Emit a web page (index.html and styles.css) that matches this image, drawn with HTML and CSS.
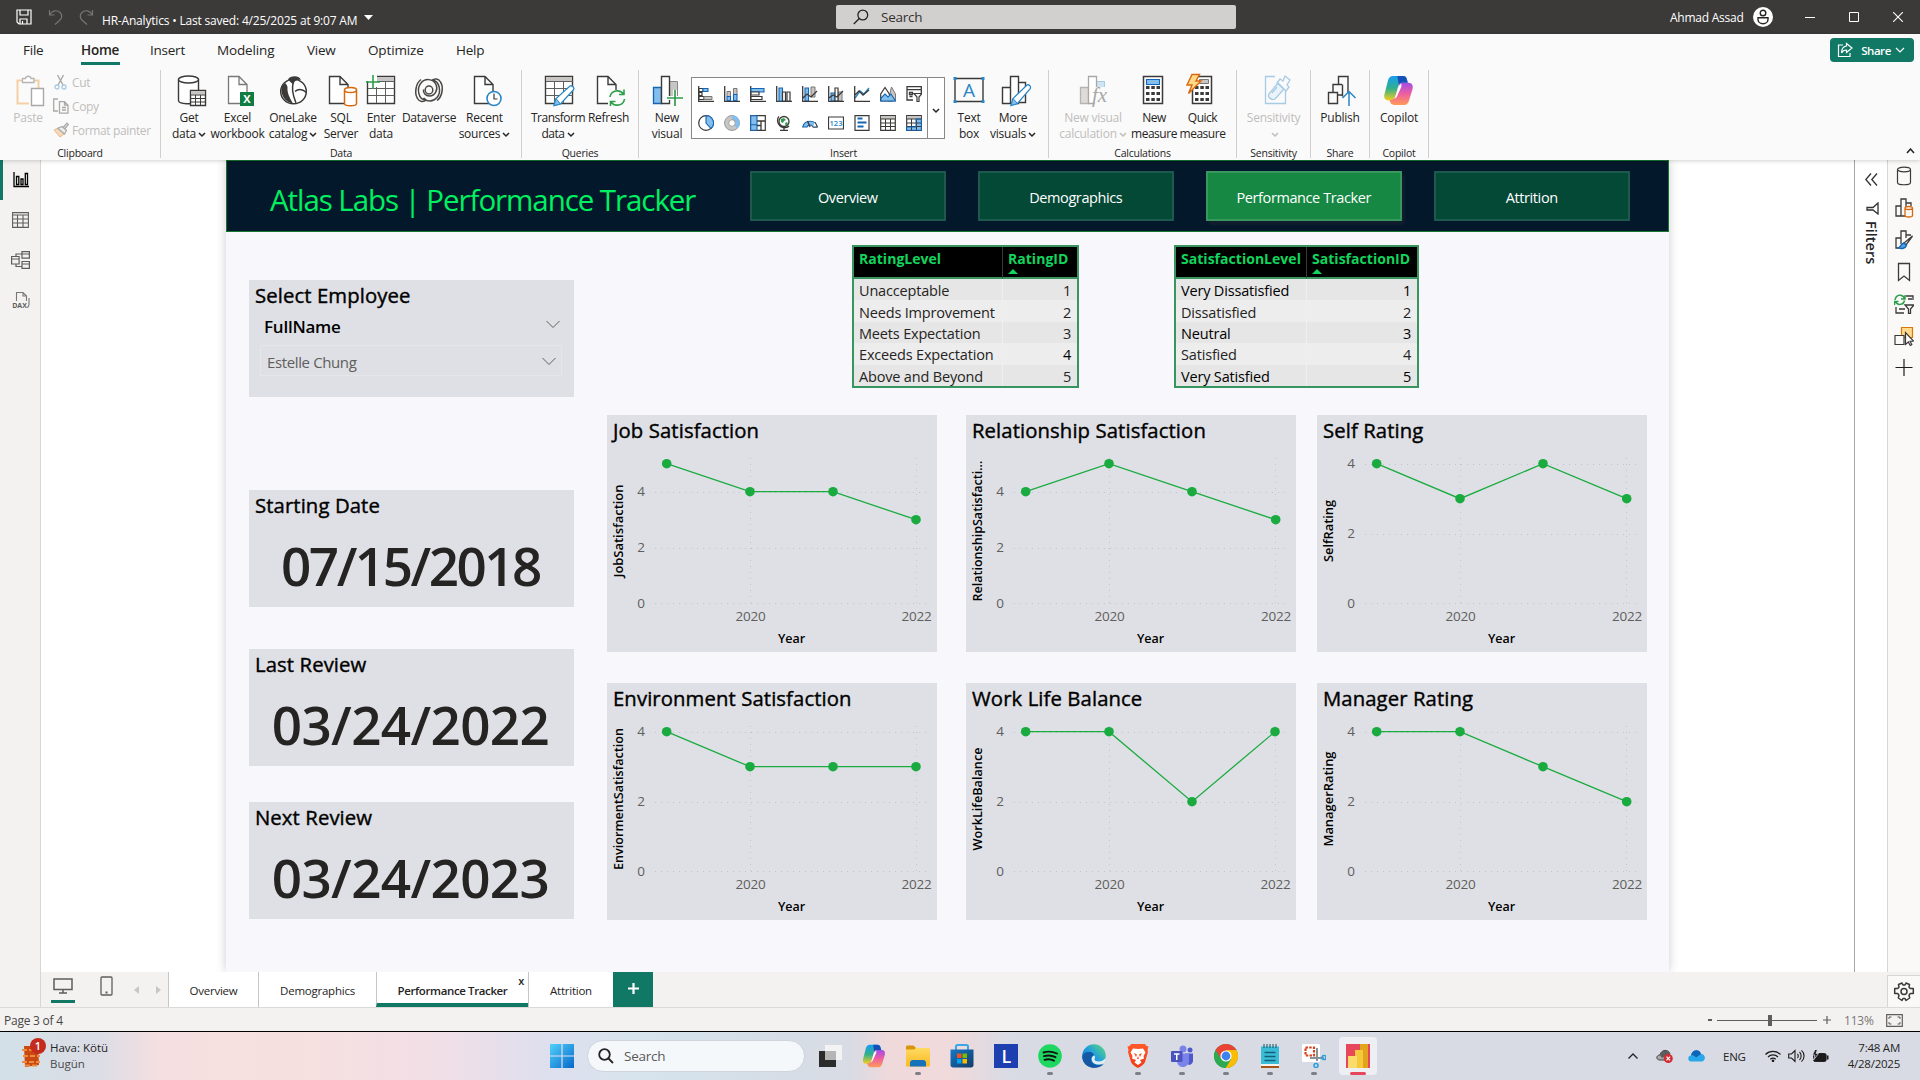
FILE: index.html
```html
<!DOCTYPE html>
<html lang="en">
<head>
<meta charset="utf-8">
<title>HR-Analytics</title>
<link rel="stylesheet" href="styles.css">
</head>
<body>
<svg class="defs" width="0" height="0" aria-hidden="true">
  <defs>
    <linearGradient id="copA" x1="0" y1="0" x2="0" y2="1"><stop offset="0" stop-color="#1a9df0"/><stop offset=".5" stop-color="#2fb08c"/><stop offset="1" stop-color="#f4cf1d"/></linearGradient>
    <linearGradient id="copB" x1="0" y1="0" x2="0" y2="1"><stop offset="0" stop-color="#a24be8"/><stop offset=".5" stop-color="#ee5fa0"/><stop offset="1" stop-color="#ff9a57"/></linearGradient>
    <linearGradient id="win" x1="0" y1="0" x2="1" y2="1"><stop offset="0" stop-color="#52d0fb"/><stop offset="1" stop-color="#0669c9"/></linearGradient>
    <linearGradient id="edge" x1="0" y1="1" x2="1" y2="0"><stop offset="0" stop-color="#0c59a4"/><stop offset=".5" stop-color="#1e9de0"/><stop offset="1" stop-color="#5fdc74"/></linearGradient>
    <linearGradient id="folder" x1="0" y1="0" x2="0" y2="1"><stop offset="0" stop-color="#ffda61"/><stop offset="1" stop-color="#f9b924"/></linearGradient>
    <linearGradient id="store" x1="0" y1="0" x2="1" y2="1"><stop offset="0" stop-color="#1479c9"/><stop offset="1" stop-color="#163a67"/></linearGradient>
    <linearGradient id="brave" x1="0" y1="0" x2="0" y2="1"><stop offset="0" stop-color="#ff5a2a"/><stop offset="1" stop-color="#f23a14"/></linearGradient>
  </defs>
  <symbol id="copilot" viewBox="0 0 28 28">
    <path d="M9 1h9c2 0 3 1 3.600 3l.8 3h-5c-2 0-3 1-3.600 3l-2.500 9c-.7 2.400-2 4-4.500 4H5c-3 0-4.500-2.500-3.700-5.600L4.500 5C5.200 2.400 6.600 1 9 1z" fill="url(#copA)"/>
    <path d="M13 1h5c2 0 3 1 3.600 3l.8 3h-5c-1.600 0-2.500.5-3.200 2z" fill="#1450b8"/>
    <path d="M19 27h-9c-2 0-3-1-3.600-3L6 22.600c3 0 4.500-1 5.200-3.600l2.800-9c.7-2 1.600-3 3.600-3H23c3 0 4.500 2.500 3.700 5.600L23.500 23c-.7 2.600-2.100 4-4.500 4z" fill="url(#copB)"/>
    <path d="M16.600 10.500 13 18.500c-.6 1.500-1.500 2.500-2.700 3l1.400-4 2-6.500c.4-1 1.600-2.500 3-3z" fill="#fff"/>
  </symbol>
  <symbol id="page" viewBox="0 0 32 32"><path d="M3.500 1.500H14L22 9.500V28.500H3.500zM14 1.500V9.500H22" fill="#fff" stroke="#3b3a39" stroke-width="1.400"/></symbol>
  <symbol id="chev" viewBox="0 0 8 6"><path d="M1 1l3 3 3-3" fill="none" stroke="currentColor" stroke-width="1.500"/></symbol>
  <symbol id="grid5" viewBox="0 0 330 237">
    <g class="gridline"><path d="M48 77.500H322M48 133.500H322M48 188.500H322"/><path d="M143.500 43V189M309.500 43V189"/></g>
  </symbol>
  <symbol id="grid4" viewBox="0 0 330 237">
    <g class="gridline"><path d="M48 49.500H322M48 119.500H322M48 188.500H322"/><path d="M143.500 43V189M309.500 43V189"/></g>
  </symbol>
</svg>

<header class="titlebar">
  <div class="quick">
    <svg width="16" height="16" viewBox="0 0 16 16" fill="none" stroke="#fff" stroke-width="1.200"><path d="M1 1h14v14H3l-2-2zM4 1v5h8V1M4 15v-5h7v5M6.500 15v-3"/></svg>
    <svg width="15" height="16" viewBox="0 0 15 16" fill="none" stroke="#777573" stroke-width="1.200"><path d="M1.500 1v5h5M1.500 6C4 1.500 9 .5 12 3.500s1.500 6-.5 8L7 15.500"/></svg>
    <svg width="15" height="16" viewBox="0 0 15 16" fill="none" stroke="#777573" stroke-width="1.200"><path d="M13.500 1v5h-5M13.500 6C11 1.500 6 .5 3 3.500s-1.500 6 .5 8L8 15.500"/></svg>
  </div>
  <div class="doc">HR-Analytics • Last saved: 4/25/2025 at 9:07 AM</div>
  <svg class="doccaret" width="9" height="5" viewBox="0 0 9 5"><path d="M0 0h9L4.500 5z" fill="#fff"/></svg>
  <div class="topsearch"><svg width="16" height="16" viewBox="0 0 16 16" fill="none" stroke="#252423" stroke-width="1.300"><circle cx="9.800" cy="6" r="4.900"/><path d="M6.300 9.500.8 15"/></svg><span>Search</span></div>
  <div class="user">Ahmad Assad</div>
  <svg class="avatar" width="20" height="20" viewBox="0 0 20 20"><circle cx="10" cy="10" r="10" fill="#fff"/><circle cx="10" cy="6" r="2.800" fill="none" stroke="#252423" stroke-width="1.400"/><path d="M5 10.800h10v1.700a5 4.300 0 0 1-10 0z" fill="none" stroke="#252423" stroke-width="1.400"/></svg>
  <div class="winbtns">
    <svg width="10" height="10" viewBox="0 0 10 10"><path d="M0 5.500h10" stroke="#fff"/></svg>
    <svg width="10" height="10" viewBox="0 0 10 10"><path d="M.5.5h9v9h-9z" fill="none" stroke="#fff"/></svg>
    <svg width="10" height="10" viewBox="0 0 10 10"><path d="M0 0l10 10M10 0 0 10" stroke="#fff" stroke-width="1.100"/></svg>
  </div>
</header>

<section class="ribbon">
  <nav class="menu">
    <a class="m-file">File</a><a class="m-home on">Home</a><a class="m-insert">Insert</a><a class="m-model">Modeling</a><a class="m-view">View</a><a class="m-opt">Optimize</a><a class="m-help">Help</a>
    <button class="share"><svg width="16" height="16" viewBox="0 0 16 16" fill="none" stroke="#fff" stroke-width="1.200"><path d="M6 3H1.500v11.500H13V11"/><path d="M9.500 1.500 15 6l-5.500 4.500V8C7 8 5.500 9 4.500 11 4.500 7 6 4.500 9.500 4z"/></svg><span>Share</span><svg width="10" height="7" viewBox="0 0 10 7"><path d="M1 1l4 4 4-4" fill="none" stroke="#fff" stroke-width="1.200"/></svg></button>
  </nav>
  <div class="groups">
    <div class="group g-clip">
      <div class="items">
        <div class="btn off w-paste"><svg viewBox="0 0 32 32"><path d="M8 5.500H3.500v23H15M20 5.500h4.500V13" fill="none" stroke="#f3cfa6" stroke-width="2"/><path d="M8.500 7.500v-4h3c.5-3 5-3 5.500 0h3v4z" fill="#fff" stroke="#b5b4b3" stroke-width="1.300"/><path d="M17.500 13.500h12v17h-12z" fill="#fff" stroke="#a9a8a7" stroke-width="1.400"/></svg><span>Paste</span></div>
        <div class="minis">
          <div><svg viewBox="0 0 16 16" fill="none"><path d="M4.500 1l5.500 10M10.500 1 5 11" stroke="#aaa9a8" stroke-width="1.400"/><circle cx="4" cy="13" r="2" stroke="#a8cbe4" stroke-width="1.300"/><circle cx="11" cy="13" r="2" stroke="#a8cbe4" stroke-width="1.300"/></svg>Cut</div>
          <div><svg viewBox="0 0 16 16" fill="none" stroke="#aaa9a8" stroke-width="1.300"><path d="M5 13H.7V1H5M6.500 3.700h5l3.500 3.500v8H6.500zM11.500 3.700v3.500H15M9 9.500h4M9 12h4"/></svg>Copy</div>
          <div><svg viewBox="0 0 16 16"><path d="M1 8l6 7 4-3-5-6.500z" fill="#f6d9b8" stroke="#e7b98b"/><path d="M5 6.500 11.500 12l2-3.500L9 4.500zM10.500 5 14 1.200l1.300 1.300L12 6.500" fill="#eee" stroke="#a9a8a7" stroke-width="1.200"/></svg>Format painter</div>
        </div>
      </div>
      <div class="label">Clipboard</div>
    </div>
    <div class="group g-data">
      <div class="items">
        <div class="btn w-get"><svg viewBox="0 0 32 32"><path d="M3.500 4.500v21c0 4 15 4 20 1.500V4.500" fill="#fff" stroke="#3b3a39" stroke-width="1.400"/><ellipse cx="13.500" cy="4.500" rx="10" ry="3.500" fill="#fff" stroke="#3b3a39" stroke-width="1.400"/><path d="M15.500 15.500h15v15h-15z" fill="#fff" stroke="#3b3a39" stroke-width="1.400"/><path d="M16 16h14v3.500H16z" fill="#c8c6c4"/><path d="M15.500 20h15M15.500 23.500h15M15.500 27h15M20.500 20v10M25.500 20v10" stroke="#3b3a39"/></svg><span>Get</span><span>data<svg class="cv"><use href="#chev"/></svg></span></div>
        <div class="btn w-excel"><svg viewBox="0 0 32 32"><path d="M6.500 1.500H17L25 9.500V28.500H6.500zM17 1.500V9.500H25" fill="#fff" stroke="#7a7876" stroke-width="1.300"/><rect x="18" y="17" width="14" height="14" fill="#107c41"/><text x="25" y="28" class="xl">X</text></svg><span>Excel</span><span>workbook</span></div>
        <div class="btn w-lake"><svg viewBox="0 0 32 32"><ellipse cx="16.500" cy="16.500" rx="12.800" ry="12.300" fill="#fff" stroke="#3b3a39" stroke-width="1.500"/><path d="M11 4.500c2-4.500 12-4.500 13 .5-3-.5-5.500.5-7 2.500l-1.500 1.500zM5 11C2.500 19 8 27.500 16 28.500c-3.500-6-6-11-5.500-16C10.500 10 8 8 8 8z" fill="#3b3a39"/><path d="M16.500 7c-3 8 1 17 2.500 21M18 16.500c4-3.500 8-2 11.500 1" fill="none" stroke="#3b3a39" stroke-width="1.500"/></svg><span>OneLake</span><span>catalog<svg class="cv"><use href="#chev"/></svg></span></div>
        <div class="btn w-sql"><svg viewBox="0 0 32 32"><use href="#page" x="1"/><path d="M19.500 15v13.500c0 3 12 3 12 0V15" fill="#fff" stroke="#d8680c" stroke-width="1.500"/><ellipse cx="25.500" cy="15" rx="6" ry="2.500" fill="#fff" stroke="#d8680c" stroke-width="1.500"/></svg><span>SQL</span><span>Server</span></div>
        <div class="btn w-enter"><svg viewBox="0 0 32 32"><path d="M2.500 6v22.500h27V1.500H12" fill="#fff" stroke="#3b3a39" stroke-width="1.400"/><path d="M12 2h17v4H12z" fill="#c8c6c4"/><path d="M12 6.500h17.500M3 13.500h26.500M3 20.500h26.500M11.500 12v16M20.500 7v21" stroke="#605e5c"/><path d="M8 0v14M1 7h14" stroke="#2f9e4c" stroke-width="1.600"/></svg><span>Enter</span><span>data</span></div>
        <div class="btn w-verse"><svg viewBox="0 0 32 32" fill="none" stroke="#4a4846" stroke-width="1.500"><path d="M8 4.500C3 8 1 18 4.500 23.500c2 3.500 6 4 8.500 1.500M24 25.500c5-3.500 7-13 3.500-18.500-2-3.500-6-4-8.500-1.500"/><path d="M13 25.500c-8-1-9.500-12-5-17.500 4-5 12-4.500 15 1.500 2.500 5-1 11.500-6.500 11.500-4 0-6.500-3-6-6.500M19 5c8 1 9.500 12 5 17.500-4 4.500-10 4.500-13.500.5"/><ellipse cx="16" cy="15" rx="3.800" ry="4"/></svg><span>Dataverse</span></div>
        <div class="btn w-recent"><svg viewBox="0 0 32 32"><use href="#page" x="1"/><circle cx="24" cy="23.500" r="7" fill="#fff" stroke="#2a86c7" stroke-width="1.600"/><path d="M24 18.500v5.500h3.500" fill="none" stroke="#3b3a39" stroke-width="1.200"/></svg><span>Recent</span><span>sources<svg class="cv"><use href="#chev"/></svg></span></div>
      </div>
      <div class="label">Data</div>
    </div>
    <div class="group g-query">
      <div class="items">
        <div class="btn w-trans"><svg viewBox="0 0 32 32"><path d="M3.500 1.500h27v27h-27z" fill="#fff" stroke="#3b3a39" stroke-width="1.400"/><path d="M4 2h26v4H4z" fill="#c8c6c4"/><path d="M4 6.500h27M4 13.500h27M4 20.500h27M12.500 7v21M21.500 7v21" stroke="#605e5c"/><path d="M12 30.500l2-7L28 11c2-1 5 1.500 3.500 3.800L18.500 29z" fill="#fff" stroke="#2a86c7" stroke-width="1.300"/><path d="M12 30.500l2-7 4.500 5.500z" fill="#83beec" stroke="#2a86c7"/></svg><span>Transform</span><span>data<svg class="cv"><use href="#chev"/></svg></span></div>
        <div class="btn w-refresh"><svg viewBox="0 0 32 32"><use href="#page" x="0"/><path d="M14 15h18v16H14z" fill="#fafafa"/><path d="M16 22c1-7 10-8 13.500-3M30.500 24c-1 7-10 8-13.500 3M30 14.500v5h-5M16.500 31v-4.500h5" fill="none" stroke="#2f9e4c" stroke-width="1.600"/></svg><span>Refresh</span></div>
      </div>
      <div class="label">Queries</div>
    </div>
    <div class="group g-insert">
      <div class="items">
        <div class="btn w-newv"><svg viewBox="0 0 32 32"><path d="M2.500 12.500h8v16h-8z" fill="#83beec" stroke="#1465b3" stroke-width="1.300"/><path d="M18.500 6.500h8v16h-8z" fill="#c8c6c4" stroke="#8a8886"/><path d="M10.500 1.500h8v27h-8z" fill="#fff" stroke="#3b3a39" stroke-width="1.400"/><path d="M24 15v16M16 23h16" stroke="#fafafa" stroke-width="4"/><path d="M24 15v16M16 23h16" stroke="#2f9e4c" stroke-width="1.700"/></svg><span>New</span><span>visual</span></div>
        <div class="gallery">
          <div class="cells">
            <svg viewBox="0 0 16 16"><path d="M.7 0v15.500H16" class="k"/><path d="M1 2.500h4v3H1zM1 10.500h5v3H1zM1 6.500h3v3H1z" class="kf"/><path d="M5 2.500h5v3H5z" class="b"/><path d="M6 10.500h8v3H6z" class="g"/></svg>
            <svg viewBox="0 0 16 16"><path d="M.7 0v15.500H16" class="k"/><path d="M3 5.500h3.500v5H3zM9.500 2.500H13v6H9.500z" class="g"/><path d="M3 10.500h3.500v4H3zM9.500 8.500H13v6H9.500z" class="b"/></svg>
            <svg viewBox="0 0 16 16"><path d="M.7 0v15.500H16" class="k"/><path d="M1 2.500h13v3.500H1z" class="b"/><path d="M1 6h8v3H1zM1 10.500h11v3H1z" class="kf"/></svg>
            <svg viewBox="0 0 16 16"><path d="M.7 0v15.500H16" class="k"/><path d="M3 2h3.500v13H3z" class="b"/><path d="M6.500 6h3v9h-3zM11 6h3v9h-3z" class="kf"/></svg>
            <svg viewBox="0 0 16 16"><path d="M3 2h3.500v13H3z" class="b"/><path d="M9 1h4v10H9z" class="g"/><path d="M.7 0v15.500H16M1 12l4-4 4 3 6-6" class="k"/></svg>
            <svg viewBox="0 0 16 16"><path d="M3 7h4v8H3z" class="b"/><path d="M10 6h4v9h-4z" class="g"/><path d="M7 2h3v13H7z" class="kf"/><path d="M.7 0v15.500H16M1 12l4-3 4 2 6-6" class="k"/></svg>
            <svg viewBox="0 0 16 16"><path d="M1 12 6 5l4 3 5-6" fill="none" stroke="#2a86c7" stroke-width="1.500"/><path d="M.7 0v15.500H16M1 9l4-4 4 4 6-5" class="k"/></svg>
            <svg viewBox="0 0 16 16"><path d="M8 15 11.500 1 15.500 8v7z" class="g"/><path d="M.7 15V8L5 1.500l4 6 3 7.500z" class="kf"/><path d="M1 15v-3l4-4 3 3 3-3 4.500 7z" class="b"/></svg>
            <svg viewBox="0 0 16 16"><path d="M1 .7h14.300v3H1zM1 4v10h6M15.300 4v3" class="k"/><path d="M3.500 6.500h3v2h-3zM3.500 10.500h3" class="k"/><path d="M8 7.500h8l-3 3.500v4.500h-2V11z" class="kf"/></svg>
            <svg viewBox="0 0 16 16"><circle cx="8" cy="8" r="7.300" class="kf"/><path d="M8 .7A7.300 7.300 0 0 1 13 13.500L8 8z" class="b"/></svg>
            <svg viewBox="0 0 16 16" fill="none"><circle cx="8" cy="8" r="5.500" stroke="#c8c6c4" stroke-width="4"/><circle cx="8" cy="8" r="7.500" stroke="#8a8886" stroke-width=".8"/><path d="M8 2.500a5.500 5.500 0 0 1 4 9.500" stroke="#83beec" stroke-width="4"/><circle cx="8" cy="8" r="3.300" stroke="#8a8886" stroke-width=".8"/></svg>
            <svg viewBox="0 0 16 16"><path d="M.7.7h14.600v14.600H.7z" class="kf"/><path d="M.7.7H7v9H.7zM.7 9.700H7v5.600H.7z" class="b"/><path d="M7 6h8M11 6v9M7 10.500h4" class="k"/></svg>
            <svg viewBox="0 0 16 16"><circle cx="8" cy="6.500" r="5" fill="#fff" stroke="#3b3a39" stroke-width="1.300"/><path d="M5 4l3-1 2 2-2 1-1 2-2-1zM10 7l2 1-2 3-1-2z" fill="#2f9e4c"/><path d="M3 1.500C0 5 2 11 7 12.500c3 .6 5-.5 6-1.500M8 13v2.500M4 15.500h8" class="k"/></svg>
            <svg viewBox="0 0 16 16"><path d="M.7 12a7.500 7.500 0 0 1 14.600 0H11a3.300 3.300 0 0 0-6 0z" class="b"/><path d="M13 7l2.300 5H11" fill="#fff" stroke="#3b3a39"/><path d="M8 12 5.500 6" class="k"/></svg>
            <svg viewBox="0 0 16 16"><path d="M.5 2h15v12H.5z" class="kf"/><text x="8" y="11" class="n123">123</text></svg>
            <svg viewBox="0 0 16 16"><path d="M1 .7h14v14.600H1z" class="kf"/><path d="M3.500 3.500h5M3.500 7.500h9M3.500 11.500h6" stroke="#1465b3" stroke-width="2"/></svg>
            <svg viewBox="0 0 16 16"><path d="M.7.7h14.600v14.600H.7z" class="kf"/><path d="M1 1h14v3H1z" fill="#c8c6c4"/><path d="M1 4h14M1 8h14M1 11.500h14M5.500 4v11M10.500 4v11" class="k thin"/></svg>
            <svg viewBox="0 0 16 16"><path d="M.7.7h14.600v14.600H.7z" class="kf"/><path d="M1 1h14v3H1z" fill="#c8c6c4"/><path d="M10 4h5v11H10zM1 12h9v3H1z" fill="#83beec"/><path d="M1 4h14M1 8h14M1 11.500h14M5.500 4v11M10.500 4v11" class="k thin"/><path d="M10 4h5.300v11.300H.7V12H10z" fill="none" stroke="#1465b3"/></svg>
          </div>
          <div class="more"><svg class="cv"><use href="#chev"/></svg></div>
        </div>
        <div class="btn w-text"><svg viewBox="0 0 32 32"><path d="M2 3.500h28v23H2z" fill="#fafafa" stroke="#3b3a39" stroke-width="1.400"/><g fill="#2a86c7"><path d="M.5 2h3v3h-3zM28.500 2h3v3h-3zM.5 25h3v3h-3zM28.500 25h3v3h-3z"/></g><text x="16" y="22" class="ta">A</text></svg><span>Text</span><span>box</span></div>
        <div class="btn w-morev"><svg viewBox="0 0 32 32"><path d="M3.500 12.500h8v16h-8zM19.500 7.500h7v20h-7zM11.500 1.500h8v27h-8z" fill="#fff" stroke="#3b3a39" stroke-width="1.400"/><path d="M12 30.500l2-7L28 10c2-1 4.500 1.500 3 3.800L18.500 28.500z" fill="#fff" stroke="#2a86c7" stroke-width="1.300"/><path d="M12 30.500l2-7 4.500 5z" fill="#83beec" stroke="#2a86c7"/></svg><span>More</span><span>visuals<svg class="cv"><use href="#chev"/></svg></span></div>
      </div>
      <div class="label">Insert</div>
    </div>
    <div class="group g-calc">
      <div class="items">
        <div class="btn off w-nvc"><svg viewBox="0 0 32 32"><path d="M3.500 12.500h8v16h-8z" fill="#dddcdb" stroke="#b5b4b3" stroke-width="1.300"/><path d="M19.500 6.500h8v6h-8z" fill="#cfe4f5" stroke="#a8cbe4"/><path d="M11.500 1.500h8v27h-8z" fill="#fff" stroke="#a9a8a7" stroke-width="1.300"/><path d="M18 12h12v18H18z" fill="#fafafa"/><text x="22.500" y="27" class="fx">fx</text></svg><span>New visual</span><span>calculation<svg class="cv"><use href="#chev"/></svg></span></div>
        <div class="btn w-nm"><svg viewBox="0 0 32 32"><path d="M5.500 1.500h19v27h-19z" fill="#fff" stroke="#3b3a39" stroke-width="1.500"/><path d="M8.500 4.500h13v5h-13z" class="b"/><path d="M8 12.500h3.500M13.300 12.500h3.500M18.500 12.500H22M8 18.500h3.500M13.300 18.500h3.500M18.500 18.500H22M8 24.500h3.500M13.300 24.500h3.500M18.500 24.500H22" stroke="#3b3a39" stroke-width="3"/></svg><span>New</span><span>measure</span></div>
        <div class="btn w-qm"><svg viewBox="0 0 32 32"><path d="M5.500 1.500h19v27h-19z" fill="#fff" stroke="#3b3a39" stroke-width="1.500"/><path d="M12.500 4.500h9v4h-9z" class="g"/><path d="M8 12.500h3.500M13.300 12.500h3.500M18.500 12.500H22M8 18.500h3.500M13.300 18.500h3.500M18.500 18.500H22M8 24.500h3.500M13.300 24.500h3.500M18.500 24.500H22" stroke="#3b3a39" stroke-width="3"/><path d="M5-.5h7.500L9 6h5L1.500 18.500 5 10H0z" fill="#ffd98a" stroke="#d8680c" stroke-width="1.400"/></svg><span>Quick</span><span>measure</span></div>
      </div>
      <div class="label">Calculations</div>
    </div>
    <div class="group g-sens">
      <div class="items">
        <div class="btn off w-sens"><svg viewBox="0 0 32 32" fill="none" stroke="#a8cbe4" stroke-width="1.300"><path d="M16 1.500H6.500v27h20V16"/><path d="M10 19 19 8l6 6-9 10c-3 2-8-2-6-5z" fill="#eaf3fa"/><path d="M18 8l3-4 3 2 2-5 5 4-3 5 2 2-3 4zM13 18l5-6"/></svg><span>Sensitivity</span><span><svg class="cv"><use href="#chev"/></svg></span></div>
      </div>
      <div class="label">Sensitivity</div>
    </div>
    <div class="group g-share">
      <div class="items">
        <div class="btn w-pub"><svg viewBox="0 0 32 32"><path d="M3.500 17.500h9v11h-9zM8 17V9.500h9M17 20h-4.500M13.500 9V1.500H23V18M17.500 9.500v12" fill="none" stroke="#3b3a39" stroke-width="1.400"/><path d="M24 31V18M17.500 23l6.500-6.500 6.500 6.500" fill="none" stroke="#2a86c7" stroke-width="1.500"/></svg><span>Publish</span></div>
      </div>
      <div class="label">Share</div>
    </div>
    <div class="group g-cop">
      <div class="items">
        <div class="btn w-cop"><svg viewBox="0 0 32 32"><use href="#copilot" x="0" y="0" width="31" height="31"/></svg><span>Copilot</span></div>
      </div>
      <div class="label">Copilot</div>
    </div>
    <svg class="collapse" width="9" height="6" viewBox="0 0 9 6"><path d="M1 5l3.500-4L8 5" fill="none" stroke="#252423" stroke-width="1.500"/></svg>
  </div>
</section>

<main class="work">
  <aside class="views">
    <div class="on"><svg width="16" height="16" viewBox="0 0 16 16" fill="none" stroke="#000" stroke-width="1.300"><path d="M1 0v14.500h15M3.500 4.500h2.300v8H3.500zM8 7h2v5.500H8zM12.300 1.500h2.200v11h-2.200z"/></svg></div>
    <div><svg width="17" height="16" viewBox="0 0 17 16" fill="none" stroke="#605e5c" stroke-width="1.100"><path d="M.6.6h15.800v14.800H.6zM.6 3h15.800M.6 7h15.800M.6 11h15.800M5.500 3v12M11 3v12"/></svg></div>
    <div><svg width="19" height="18" viewBox="0 0 19 18" fill="none" stroke="#605e5c" stroke-width="1.200"><path d="M.6 5.500h7.500v7.500H.6zM.6 8h7.500M11 .6h7.400v6.600H11zM11 3h7.400M11 10.500h7.400v6.800H11zM11 13h7.400M5 5.500V3h6M5 13v2.500h6"/></svg></div>
    <div><svg width="18" height="18" viewBox="0 0 18 18" fill="none" stroke="#7a7876" stroke-width="1.100"><path d="M4.500 10V1.500H11L14.500 5v5M11 1.500V5h3.500M17 7v6.500c0 2-1 2.500-2 3"/><text x="7.500" y="16.500" class="dax">DAX</text></svg></div>
  </aside>

  <section class="canvas">
    <article class="report">
      <header class="banner">
        <h1>Atlas Labs | Performance Tracker</h1>
        <nav><a>Overview</a><a>Demographics</a><a class="on">Performance Tracker</a><a>Attrition</a></nav>
      </header>
      <div class="board">
        <div class="left">
          <section class="card slicer">
            <h2>Select Employee</h2>
            <div class="field"><b>FullName</b><svg width="14" height="9" viewBox="0 0 14 9"><path d="M.5 1 7 7.500 13.500 1" fill="none" stroke="#605e5c"/></svg></div>
            <div class="drop"><span>Estelle Chung</span><svg width="14" height="9" viewBox="0 0 14 9"><path d="M.5 1 7 7.500 13.500 1" fill="none" stroke="#605e5c"/></svg></div>
          </section>
          <section class="card"><h2>Starting Date</h2><p class="date d1">07/15/2018</p></section>
          <section class="card"><h2>Last Review</h2><p class="date">03/24/2022</p></section>
          <section class="card"><h2>Next Review</h2><p class="date">03/24/2023</p></section>
        </div>
        <div class="right">
          <div class="tables">
            <table class="rating">
              <thead><tr><th>RatingLevel</th><th>RatingID<i></i></th></tr></thead>
              <tbody><tr><td>Unacceptable</td><td>1</td></tr><tr><td>Needs Improvement</td><td>2</td></tr><tr><td>Meets Expectation</td><td>3</td></tr><tr><td>Exceeds Expectation</td><td class="dk">4</td></tr><tr><td>Above and Beyond</td><td>5</td></tr></tbody>
            </table>
            <table class="satis">
              <thead><tr><th>SatisfactionLevel</th><th>SatisfactionID<i></i></th></tr></thead>
              <tbody><tr class="dk"><td>Very Dissatisfied</td><td>1</td></tr><tr><td>Dissatisfied</td><td>2</td></tr><tr class="dk"><td>Neutral</td><td>3</td></tr><tr><td>Satisfied</td><td>4</td></tr><tr class="dk"><td>Very Satisfied</td><td>5</td></tr></tbody>
            </table>
          </div>
          <div class="charts">
            <section class="chart"><h2>Job Satisfaction</h2><svg viewBox="0 0 330 237"><use href="#grid5"/><g class="tick"><text x="34" y="81">4</text><text x="34" y="136.500">2</text><text x="34" y="192.500">0</text><text x="143.500" y="205.500">2020</text><text x="309.500" y="205.500">2022</text></g><text class="axis" x="184.500" y="228">Year</text><text class="axis" transform="translate(16 116)rotate(-90)" textLength="93" lengthAdjust="spacingAndGlyphs">JobSatisfaction</text><g class="series"><path d="M59.700 48.700 143 76.700 226 76.700 309 104.700"/><circle cx="59.700" cy="48.700" r="4.800"/><circle cx="143" cy="76.700" r="4.800"/><circle cx="226" cy="76.700" r="4.800"/><circle cx="309" cy="104.700" r="4.800"/></g></svg></section>
            <section class="chart"><h2>Relationship Satisfaction</h2><svg viewBox="0 0 330 237"><use href="#grid5"/><g class="tick"><text x="34" y="81">4</text><text x="34" y="136.500">2</text><text x="34" y="192.500">0</text><text x="143.500" y="205.500">2020</text><text x="310" y="205.500">2022</text></g><text class="axis" x="184.500" y="228">Year</text><text class="axis" transform="translate(16 116)rotate(-90)" textLength="141" lengthAdjust="spacingAndGlyphs">RelationshipSatisfacti...</text><g class="series"><path d="M59.700 76.700 143 48.700 226 76.700 309.700 104.700"/><circle cx="59.700" cy="76.700" r="4.800"/><circle cx="143" cy="48.700" r="4.800"/><circle cx="226" cy="76.700" r="4.800"/><circle cx="309.700" cy="104.700" r="4.800"/></g></svg></section>
            <section class="chart"><h2>Self Rating</h2><svg viewBox="0 0 330 237"><use href="#grid4"/><g class="tick"><text x="34" y="53">4</text><text x="34" y="123">2</text><text x="34" y="192.500">0</text><text x="143.500" y="205.500">2020</text><text x="310" y="205.500">2022</text></g><text class="axis" x="184.500" y="228">Year</text><text class="axis" transform="translate(16 116)rotate(-90)" textLength="62" lengthAdjust="spacingAndGlyphs">SelfRating</text><g class="series"><path d="M59.700 48.700 143 83.700 226 48.700 309.700 83.700"/><circle cx="59.700" cy="48.700" r="4.800"/><circle cx="143" cy="83.700" r="4.800"/><circle cx="226" cy="48.700" r="4.800"/><circle cx="309.700" cy="83.700" r="4.800"/></g></svg></section>
            <section class="chart"><h2>Environment Satisfaction</h2><svg viewBox="0 0 330 237"><use href="#grid4"/><g class="tick"><text x="34" y="53">4</text><text x="34" y="123">2</text><text x="34" y="192.500">0</text><text x="143.500" y="205.500">2020</text><text x="309.500" y="205.500">2022</text></g><text class="axis" x="184.500" y="228">Year</text><text class="axis" transform="translate(16 116)rotate(-90)" textLength="142" lengthAdjust="spacingAndGlyphs">EnviormentSatisfaction</text><g class="series"><path d="M59.700 48.700 143 83.700 226 83.700 309 83.700"/><circle cx="59.700" cy="48.700" r="4.800"/><circle cx="143" cy="83.700" r="4.800"/><circle cx="226" cy="83.700" r="4.800"/><circle cx="309" cy="83.700" r="4.800"/></g></svg></section>
            <section class="chart"><h2>Work Life Balance</h2><svg viewBox="0 0 330 237"><use href="#grid4"/><g class="tick"><text x="34" y="53">4</text><text x="34" y="123">2</text><text x="34" y="192.500">0</text><text x="143.500" y="205.500">2020</text><text x="309.500" y="205.500">2022</text></g><text class="axis" x="184.500" y="228">Year</text><text class="axis" transform="translate(16 116)rotate(-90)" textLength="103" lengthAdjust="spacingAndGlyphs">WorkLifeBalance</text><g class="series"><path d="M59.700 48.700 143 48.700 226 118.700 309 48.700"/><circle cx="59.700" cy="48.700" r="4.800"/><circle cx="143" cy="48.700" r="4.800"/><circle cx="226" cy="118.700" r="4.800"/><circle cx="309" cy="48.700" r="4.800"/></g></svg></section>
            <section class="chart"><h2>Manager Rating</h2><svg viewBox="0 0 330 237"><use href="#grid4"/><g class="tick"><text x="34" y="53">4</text><text x="34" y="123">2</text><text x="34" y="192.500">0</text><text x="143.500" y="205.500">2020</text><text x="310" y="205.500">2022</text></g><text class="axis" x="184.500" y="228">Year</text><text class="axis" transform="translate(16 116)rotate(-90)" textLength="95" lengthAdjust="spacingAndGlyphs">ManagerRating</text><g class="series"><path d="M59.700 48.700 143 48.700 226 83.700 309.700 118.700"/><circle cx="59.700" cy="48.700" r="4.800"/><circle cx="143" cy="48.700" r="4.800"/><circle cx="226" cy="83.700" r="4.800"/><circle cx="309.700" cy="118.700" r="4.800"/></g></svg></section>
          </div>
        </div>
      </div>
    </article>
  </section>

  <aside class="filters">
    <svg width="13" height="13" viewBox="0 0 13 13"><path d="M6 .5.8 6.500 6 12.500M12 .5 6.800 6.500 12 12.500" fill="none" stroke="#323130" stroke-width="1.300"/></svg>
    <svg class="funnel" width="13" height="13" viewBox="0 0 13 13"><path d="M12 1v11L7 8H1V5.500h6z" fill="none" stroke="#323130" stroke-width="1.300"/></svg>
    <span>Filters</span>
  </aside>
  <aside class="panes">
    <svg viewBox="0 0 20 20" fill="none" stroke="#3b3a39" stroke-width="1.200"><path d="M3.500 3.500v13c0 3 13 3 13 0v-13"/><ellipse cx="10" cy="3.500" rx="6.500" ry="2.300"/></svg>
    <svg viewBox="0 0 20 20" fill="none" stroke="#3b3a39" stroke-width="1.300"><path d="M2 8h5v10H2zM7 1h5v17H7zM12 5h5v3"/><path d="M11 10v7.500c0 2 7.500 2 7.500 0V10c0-2-7.500-2-7.500 0s7.500 2 7.500 0" fill="#faf9f8" stroke="#d8680c"/></svg>
    <svg viewBox="0 0 20 20" fill="none" stroke="#3b3a39" stroke-width="1.300"><path d="M5 18H2V8h5V1h5v7M7 8v6M12 5h5"/><path d="M18.500 6 12 15l-2-2z" fill="#fff"/><path d="M10 13l2.500 2.500c-1 3-5 3.500-8 2.500 2-1 2.500-4.500 5.500-5z" fill="#4fa3e0" stroke="#1465b3"/></svg>
    <svg viewBox="0 0 20 20" fill="none" stroke="#3b3a39" stroke-width="1.300"><path d="M4.500 1.500h11v17L10 14l-5.500 4.500z"/></svg>
    <svg viewBox="0 0 20 20" fill="none" stroke="#3b3a39" stroke-width="1.300"><path d="M12 2h7v4M2 13v6h8M5 15h6M14 5h4"/><path d="M11 11h9l-3.500 4v4.500h-2V15z"/><path d="M1 6c1-6 8-6 9.500-1.500M10.500 6.500c-1 5-7.500 5-9 1M11 1v4H7M.5 11V7.500h4" stroke="#2f9e4c" stroke-width="1.500"/></svg>
    <svg viewBox="0 0 20 20" fill="none" stroke="#3b3a39" stroke-width="1.200"><path d="M7.500 1.500h11v10h-11z" fill="#ffdb8b" stroke="#d8780c"/><path d="M1 9.500h9v9H1z" fill="#faf9f8"/><path d="M11.500 6.500v12l2.800-2.500 2 3.500 1.500-1-1.800-3.200 3.500-.3z" fill="#fff"/></svg>
    <svg viewBox="0 0 20 20"><path d="M10 1v17M1.500 9.500h17" stroke="#201f1e" stroke-width="1.200"/></svg>
  </aside>
</main>

<footer class="tabs">
  <div class="rail"></div>
  <div class="device">
    <span class="desk on"><svg width="20" height="16" viewBox="0 0 20 16" fill="none" stroke="#605e5c" stroke-width="1.500"><path d="M1 1h18v10.500H1zM10 11.500V15M6 15h8"/></svg></span>
    <span class="phone"><svg width="13" height="20" viewBox="0 0 13 20" fill="none" stroke="#605e5c" stroke-width="1.300"><rect x="1" y="1" width="11" height="18" rx="1"/><path d="M5.500 16.500h2" stroke-width="2"/></svg></span>
    <svg class="arr" width="5" height="8" viewBox="0 0 5 8"><path d="M5 0v8L0 4z" fill="#c8c6c4"/></svg>
    <svg class="arr2" width="5" height="8" viewBox="0 0 5 8"><path d="M0 0v8l5-4z" fill="#c8c6c4"/></svg>
  </div>
  <a class="t1">Overview</a><a class="t2">Demographics</a><a class="t3 on">Performance Tracker<i>x</i></a><a class="t4">Attrition</a><a class="add"><svg width="11" height="11" viewBox="0 0 11 11"><path d="M5.500 0v11M0 5.500h11" stroke="#fff" stroke-width="2.200"/></svg></a>
  <div class="gear"><svg width="22" height="20" viewBox="0 0 22 20" fill="none" stroke="#3b3a39" stroke-width="1.500" stroke-linejoin="round"><path d="M9 1l1 2h2l1-2 3.500 1.500-.5 2.700 1.300 1.300h3v5h-3L16 13.300l.7 2.700L13 18.500l-1-2h-2l-1 2L5.300 16l.7-2.700-1.300-1.800h-3v-5h3L6 5.200l-.5-2.700z"/><circle cx="11" cy="9.500" r="3"/></svg></div>
</footer>
<footer class="status">
  <span class="pg">Page 3 of 4</span>
  <b class="minus"></b><div class="slider"><i></i></div>
  <svg class="plus" width="8" height="8" viewBox="0 0 8 8"><path d="M4 0v8M0 4h8" stroke="#605e5c" stroke-width="1.200"/></svg>
  <span class="pct">113%</span>
  <svg width="17" height="13" viewBox="0 0 17 13" fill="none" stroke="#605e5c"><path d="M.7.7h15.600v11.600H.7z" stroke-width="1.200"/><path d="M3 5V3h2.500M11.500 3H14v2M14 8v2h-2.500M5.500 10H3V8"/></svg>
</footer>

<footer class="taskbar">
  <div class="weather">
    <svg width="34" height="34" viewBox="0 0 34 34"><path d="M4 9h14l1 19-14 2z" fill="#c94a10"/><path d="M2 13h17M3 19h17M2 25h18M5 28.500h14" stroke="#f08a3c" stroke-width="1.800" stroke-dasharray="5 2"/><circle cx="18" cy="9" r="8" fill="#c42b1c"/><text x="18" y="13" class="badge">1</text></svg>
    <div><p>Hava: Kötü</p><p class="sub">Bugün</p></div>
  </div>
  <div class="dock">
    <svg class="start" width="24" height="24" viewBox="0 0 24 24"><path d="M0 0h11.400v11.400H0zM12.600 0H24v11.400H12.600zM0 12.600h11.400V24H0zM12.600 12.600H24V24H12.600z" fill="url(#win)"/></svg>
    <div class="find"><svg width="16" height="16" viewBox="0 0 16 16" fill="none" stroke="#252423" stroke-width="1.800"><circle cx="6.500" cy="6.500" r="5.300"/><path d="M10.500 10.500l4.500 4.500"/></svg><span>Search</span></div>
    <div class="app"><svg viewBox="0 0 24 24"><path d="M1 7h17v16H1z" fill="#2b2b2b"/><path d="M7 1h17v15H7z" fill="#f3f3f3"/><path d="M7 7h11v9H7z" fill="#b5b5b5"/></svg></div>
    <div class="app"><svg viewBox="0 0 24 24"><use href="#copilot" width="24" height="24"/></svg></div>
    <div class="app run"><svg viewBox="0 0 24 24"><path d="M0 3c0-1 .5-1.500 1.500-1.500h6L10 4v3H0z" fill="#d9940a"/><path d="M0 5.500h8L10 4h12.500c1 0 1.500.5 1.500 1.500V21c0 1-.5 1.500-1.500 1.500h-21C.5 22.500 0 22 0 21z" fill="url(#folder)"/><path d="M4 22.500v-4c0-1 1-2.500 2.500-2.500h11c1.500 0 2.500 1.500 2.500 2.500v4z" fill="#1673bb"/></svg></div>
    <div class="app"><svg viewBox="0 0 24 24"><path d="M6 6V2.500C6 1.500 6.500 1 7.500 1h9c1 0 1.500.5 1.500 1.500V6" fill="none" stroke="#38a7e8" stroke-width="2"/><path d="M.5 5.500h23V21c0 1.500-1 2.500-2.500 2.500H3C1.500 23.500.5 22.500.5 21z" fill="url(#store)"/><path d="M7 9.500h4.500V14H7z" fill="#f25022"/><path d="M12.500 9.500H17V14h-4.500z" fill="#7fba00"/><path d="M7 15h4.500v4.500H7z" fill="#00a4ef"/><path d="M12.500 15H17v4.500h-4.500z" fill="#ffb900"/></svg></div>
    <div class="app"><svg viewBox="0 0 24 24"><path d="M0 0h24v24H0z" fill="#1d3fb0"/><text x="12.500" y="18.500" class="ell">L</text></svg></div>
    <div class="app run"><svg viewBox="0 0 24 24"><circle cx="12" cy="12" r="11.800" fill="#1ed760"/><path d="M5.500 8.500c4.500-1.500 9-1 13.500 1M6 12.200c4-1.200 8-.8 11.500 1M6.500 15.800c3.500-1 6.500-.6 9.500.9" fill="none" stroke="#111" stroke-width="1.900" stroke-linecap="round"/></svg></div>
    <div class="app"><svg viewBox="0 0 24 24"><circle cx="12" cy="12" r="11.800" fill="url(#edge)"/><path d="M.3 13C1 9 4.500 7.500 8 8c3 .5 4 2 4 3.500-2 0-3.500 2-3 4.500.5 3.500 4 5.500 7.500 5.200 2 0 4-.7 5.500-1.700-2.500 3.300-6.500 4.700-11 4.300C4.500 23 .5 18.500.3 13z" fill="#1457a3"/><path d="M12 11.500c1.500.7 1 2.500.5 3.500 0 1.800 2 2.500 4 2.500 3 0 6-1.500 7.200-4-.2 3-1 4.800-2.200 6-3 1.500-8 1.500-10.500-1-2-2.500-1.500-6 1-7z" fill="#e3ecf3"/></svg></div>
    <div class="app run"><svg viewBox="0 0 24 24"><path d="M5 0h14l1.500 2L22.500 2.500 21.500 6l.5 2-3 10c-.5 2-5 5-7 6-2-1-6.500-4-7-6L2 8l.5-2-1-3.500L3.500 2z" fill="url(#brave)"/><path d="M12 5l5-.5 2.500 4-2 3.500.5 2.500-4 1.500 1.500 2.500-3.500 2.500L8.500 18.500 10 16l-4-1.500.5-2.500-2-3.500L7 4.500z" fill="#fff"/><path d="M8 9l3 1.500-1 2.500zM16 9l-3 1.500 1 2.500zM12 12l1 3h-2z" fill="#fb4a1e"/></svg></div>
    <div class="app run"><svg viewBox="0 0 24 24"><circle cx="13" cy="5" r="3.500" fill="#7b83eb"/><circle cx="20" cy="6" r="2.500" fill="#5059c9"/><path d="M15 9.500h8V17c0 2-2 4-4.500 4z" fill="#5059c9"/><path d="M7 9.500h12V17c0 3.500-3 6-6 6s-6-2-6-6z" fill="#7b83eb"/><rect x="1" y="7" width="11.500" height="11" rx="1" fill="#4b53bc"/><path d="M4 10h5.500M6.750 10v6" stroke="#fff" stroke-width="1.500"/></svg></div>
    <div class="app run"><svg viewBox="0 0 24 24"><circle cx="12" cy="12" r="12" fill="#2da94f"/><path d="M1.600 6A12 12 0 0 1 22.400 6H12L7 15z" fill="#ea4335"/><path d="M22.400 6A12 12 0 0 1 11.500 24L17 15l-5-9z" fill="#fbbc05"/><path d="M1.600 6A12 12 0 0 0 11.500 24L17 15H7z" fill="#2da94f"/><circle cx="12" cy="12" r="5.600" fill="#fff"/><circle cx="12" cy="12" r="4.400" fill="#3f82ee"/></svg></div>
    <div class="app run"><svg viewBox="0 0 24 24"><path d="M3 21h18v3H3z" fill="#a55317"/><path d="M3 2.500h18V21H3z" fill="#38bcd8"/><path d="M6 0v4M9 0v4M12 0v4M15 0v4M18 0v4" stroke="#17505f"/><path d="M6.500 8.500h11M6.500 12.500h11M6.500 16.500h11" stroke="#155e75" stroke-width="1.500"/><path d="M3 20h18v2H3z" fill="#f8f3ea"/></svg></div>
    <div class="app run"><svg viewBox="0 0 24 24"><rect x="0" y="0" width="18" height="18" rx="1.500" fill="#fff"/><path d="M3.500 3.500h8.500v8H3.500z" fill="none" stroke="#d4431b" stroke-width="2.200" stroke-dasharray="2.500 1.200"/><path d="M15 4v13M8 14h14" stroke="#8a9299" stroke-width="2"/><circle cx="22" cy="13.500" r="2" fill="none" stroke="#2d9fe0" stroke-width="1.600"/><circle cx="14" cy="21.500" r="2" fill="none" stroke="#2d9fe0" stroke-width="1.600"/></svg></div>
    <div class="app active"><svg viewBox="0 0 24 24"><path d="M0 0h24v24H0z" fill="#e8475b"/><path d="M14 0h8v24h-8z" fill="#e0a51c"/><path d="M9 6h8v18H9z" fill="#f6c93b"/><path d="M2 12h9v12H2z" fill="#f9dc6b"/></svg></div>
  </div>
  <div class="tray">
    <svg class="up" width="10" height="6" viewBox="0 0 10 6"><path d="M.5 5.500 5 1l4.500 4.500" fill="none" stroke="#252423" stroke-width="1.300"/></svg>
    <svg class="cloud" width="17" height="14" viewBox="0 0 17 14"><path d="M4 11C-.5 11 0 6 4 6c1-6 9-6 10-1l-5 6z" fill="#a8a8a8" stroke="#444"/><path d="M4 6C5 1 12 0 14 5L6 9z" fill="#5c5c5c"/><circle cx="12.300" cy="9.500" r="4.500" fill="#d42a34"/><path d="M10.500 7.700l3.600 3.600M14.100 7.700l-3.600 3.600" stroke="#fff" stroke-width="1.200"/></svg>
    <svg class="drive" width="17" height="12" viewBox="0 0 17 12"><path d="M3 11.500C-.5 11-.8 6 3 5.500 4-1 12-1.500 13 4c5 0 5 7 1 7.500z" fill="#28a8ea"/><path d="M3 5.500C4-1 12-1.500 13 4L8 7.500C6 5 4 5 3 5.500z" fill="#0f63b8"/></svg>
    <span class="eng">ENG</span>
    <svg class="net" width="16" height="12" viewBox="0 0 16 12" fill="none" stroke="#1b1b1b" stroke-width="1.200"><path d="M.5 4.500a10.500 10.500 0 0 1 15 0M3 7a7 7 0 0 1 10 0M5.300 9.300a4 4 0 0 1 5.400 0"/><circle cx="8" cy="10.800" r=".7" fill="#1b1b1b"/></svg>
    <svg class="vol" width="17" height="14" viewBox="0 0 17 14" fill="none" stroke="#1b1b1b" stroke-width="1.100"><path d="M.7 5v4h2.800L7 12.500v-11L3.500 5zM9.500 5c1 1 1 3 0 4M11.500 3c2.200 2 2.200 6 0 8M13.500 1.300c3.400 3 3.400 8.400 0 11.400"/></svg>
    <svg class="bat" width="17" height="13" viewBox="0 0 17 13"><rect x="1.600" y="3.600" width="12.500" height="7.800" rx="1.500" fill="#1b1b1b" stroke="#1b1b1b"/><path d="M15 5.500h1.500v4H15z" fill="#1b1b1b"/><path d="M3-.5.5 5H3L1.500 10 6.500 3.500H4L5.500-.5z" fill="#1b1b1b" stroke="#d8dbe3" stroke-width=".8"/></svg>
    <div class="clock"><p>7:48 AM</p><p>4/28/2025</p></div>
  </div>
</footer>
</body>
</html>
```
FILE: styles.css
```css
* { box-sizing: border-box; }
body { margin: 0; width: 1920px; height: 1080px; overflow: hidden; background: #f3f2f1; font-family: "Open Sans", "Noto Sans", sans-serif; font-size: 12px; color: #252423; letter-spacing: -0.02em; white-space: nowrap; display: flex; flex-direction: column; }
p, h1, h2 { margin: 0; font-weight: 400; }
svg { display: block; flex: none; }
.defs { position: absolute; }
svg text { letter-spacing: 0; }

/* Title bar */
.titlebar { height: 34px; flex: none; background: #3b3a39; color: #fff; display: flex; align-items: center; }
.quick { display: flex; gap: 16px; padding-left: 16px; width: 102px; }
.doc { width: 258px; padding-top: 6px; letter-spacing: -0.016em; }
.doccaret { margin-left: 4px; }
.topsearch { width: 400px; height: 24px; margin-left: 463px; background: #d2d0ce; color: #323130; border-radius: 2px; display: flex; align-items: center; padding-left: 17px; gap: 12px; font-size: 13.500px; margin-bottom: 1px; }
.user { width: 73px; margin-left: 434px; }
.avatar { margin-left: 10px; }
.winbtns { display: flex; gap: 34px; margin-left: 32px; }

/* Ribbon */
.ribbon { height: 126px; flex: none; background: #fafafa; box-shadow: 0 1px 4px rgba(0,0,0,.18); position: relative; z-index: 2; }
.menu { height: 36px; display: flex; padding-left: 23px; font-size: 13.500px; line-height: 32px; align-items: flex-start; }
.menu a { flex: none; height: 31px; }
.m-file { width: 58px; }
.m-home { width: 39px; margin-right: 30px; font-weight: 600; border-bottom: 3px solid #117865; }
.m-insert { width: 67px; } .m-model { width: 90px; letter-spacing: -0.01em; } .m-view { width: 61px; } .m-opt { width: 88px; letter-spacing: -0.01em; } .m-help { width: 32px; }
.share { margin: 4px 0 0 1342px; width: 84px; height: 24px; border: 0; border-radius: 4px; background: #117865; color: #fff; font: 600 11.500px "Open Sans", sans-serif; letter-spacing: -0.04em; display: flex; align-items: center; gap: 8px; padding: 0 7px; }
.share span { width: 30px; }
.share svg:last-child { margin-left: -4px; }
.groups { display: flex; height: 90px; }
.group { height: 88px; border-right: 1px solid #d2d0ce; flex: none; }
.items { display: flex; height: 76px; padding-top: 5px; }
.label { text-align: center; font-size: 10.500px; line-height: 15px; height: 14px; }
.g-clip { width: 161px; } .g-clip .items { padding-left: 11px; }
.g-data { width: 361px; } .g-data .items { padding-left: 6px; }
.g-query { width: 117px; } .g-query .items { padding-left: 7px; }
.g-insert { width: 410px; } .g-insert .items { padding-left: 7px; }
.g-calc { width: 188px; } .g-calc .items { padding-left: 11px; }
.g-sens { width: 74px; } .g-share { width: 59px; } .g-cop { width: 59px; }
.g-sens .items, .g-share .items, .g-cop .items { justify-content: center; }
.btn { display: flex; flex-direction: column; align-items: center; line-height: 16px; flex: none; }
.btn > svg { width: 32px; height: 32px; margin-bottom: 3px; overflow: visible; }
.btn > span { display: flex; align-items: center; min-height: 16px; }
.w-paste > svg, .w-morev > svg { margin-left: 4px; }
.w-get > svg, .w-recent > svg, .w-refresh > svg, .w-pub > svg, .w-sens > svg { margin-left: 3px; }
.off, .minis { color: #bfbdbb; }
.cv { width: 8px; height: 6px; margin: 2px 0 0 2px; }
.w-paste { width: 34px; }
.minis { display: flex; flex-direction: column; padding: 0 0 0 8px; margin-top: -5px; height: 73px; }
.minis div { display: flex; align-items: center; height: 24.200px; gap: 3px; letter-spacing: -0.03em; }
.minis svg { width: 16px; height: 16px; }
.w-get { width: 44px; } .w-excel { width: 53px; } .w-lake { width: 58px; } .w-sql { width: 38px; } .w-enter { width: 42px; } .w-verse { width: 54px; } .w-recent { width: 57px; }
.w-trans { width: 58px; letter-spacing: -0.04em; } .w-refresh { width: 43px; }
.w-newv { width: 42px; } .w-text { width: 36px; margin-left: 6px; } .w-morev { width: 48px; margin-left: 2px; }
.w-nvc { width: 66px; } .w-nm { width: 48px; margin-left: 4px; letter-spacing: -0.04em; } .w-qm { width: 49px; letter-spacing: -0.04em; }
.gallery { width: 254px; height: 62px; margin: 2px 0 0 3px; border: 1px solid #8a8886; background: #fff; display: flex; }
.cells { width: 236px; border-right: 1px solid #8a8886; display: grid; grid-template-columns: repeat(9, 26px); grid-template-rows: 29px 29px; padding: 1px 0 0 1px; place-items: center; align-content: start; }
.cells svg { width: 16px; height: 16px; }
.more { flex: 1; display: flex; align-items: center; justify-content: center; }
.more .cv { margin: 6px 0 0; }
.k { fill: none; stroke: #3b3a39; stroke-width: 1.300; }
.thin { stroke-width: 1; }
.kf { fill: #fff; stroke: #3b3a39; stroke-width: 1.200; }
.b { fill: #83beec; stroke: #1465b3; stroke-width: 1.100; }
.g { fill: #c8c6c4; stroke: #7a7876; stroke-width: 1; }
.xl { font: 700 11px "Open Sans"; fill: #fff; text-anchor: middle; }
.ta { font: 19px "Open Sans"; fill: #2a86c7; text-anchor: middle; }
.n123 { font: 600 7.500px "Open Sans"; fill: #2a86c7; text-anchor: middle; }
.fx { font: italic 21px "Liberation Serif"; fill: #a9a8a7; text-anchor: middle; }
.collapse { margin: 78px 0 0 477px; }

/* Work area */
.work { height: 812px; flex: none; display: flex; background: #fff; }
.views { width: 41px; background: #f3f2f1; border-right: 1px solid #d8d6d4; }
.views div { height: 40px; display: flex; align-items: center; justify-content: center; border-left: 3px solid transparent; padding-right: 2px; }
.views div.on { border-color: #117865; }
.dax { font: 700 7px "Open Sans"; fill: #605e5c; stroke: none; text-anchor: middle; }
.canvas { width: 1813px; padding-left: 185px; overflow: hidden; }
.report { width: 1443px; height: 812px; background: #f7f7fc; box-shadow: 0 0 10px rgba(0,0,0,.2); }
.banner { height: 72px; background: #03182b; border: 1px solid #15762f; display: flex; align-items: center; }
.banner h1 { font-size: 29.500px; color: #00f060; width: 480px; margin: 8px 0 0 43px; letter-spacing: -0.036em; line-height: 40px; }
.banner nav { display: flex; gap: 31.500px; margin-left: -0.500px; font-size: 14.500px; letter-spacing: -0.028em; color: #fff; }
.banner nav a { width: 196.500px; height: 50px; background: #044936; border: 2px solid #1d594c; display: flex; align-items: center; justify-content: center; padding-top: 2px; }
.banner nav a.on { background: #168843; border-color: #37975c; box-shadow: 3px 4px 3px rgba(40,40,50,.4); }
.board { display: flex; height: 740px; }
.left { width: 325px; margin: 48px 33px 0 23px; }
.card { height: 117px; background: #dfe0e5; margin-bottom: 42px; padding: 3px 6px 0; }
.card:last-child { margin: 36px 0 0; }
.card:nth-child(3) { margin-bottom: 0; }
.card h2, .chart h2 { font-size: 20.300px; letter-spacing: 0.005em; line-height: 24px; color: #000; -webkit-text-stroke: .4px #000; }
.date { font-size: 53px; font-weight: 600; line-height: 60px; margin: 19px 0 0 -2px; text-align: center; letter-spacing: -0.012em; }
.d1 { letter-spacing: -0.047em; }
.slicer { margin-bottom: 93px; }
.field { display: flex; justify-content: space-between; align-items: center; font-size: 17px; height: 27px; padding: 11px 8px 0 9px; color: #000; }
.field b { font-weight: 600; }
.field svg { margin-top: -3px; }
.drop { display: flex; justify-content: space-between; align-items: center; height: 31px; margin: 11px 6px 0 5px; padding: 2px 5px 0 6px; border: 1px solid #e6e6ea; font-size: 15px; letter-spacing: -0.025em; color: #605e5c; }
.right { width: 1041px; }
.tables { height: 183px; padding-top: 13px; display: flex; }
table { border-collapse: separate; border-spacing: 0; border: 2px solid #379660; height: 143px; table-layout: fixed; font-size: 14.500px; letter-spacing: -0.012em; }
.rating { width: 227px; margin-left: 245px; }
.satis { width: 245px; margin-left: 95px; }
.rating th:first-child { width: 148px; } .satis th:first-child { width: 130px; }
th { height: 32px; background: #000; color: #12d45c; font-weight: 700; text-align: left; vertical-align: top; line-height: 20px; padding: 2px 0 0 5px; font-size: 14px; letter-spacing: 0.002em; border-bottom: 2px solid #379660; }
th + th { border-left: 1px solid #3b3a39; }
th i { display: block; width: 0; border: 5px solid transparent; border-top: 0; border-bottom-color: #12d45c; margin-bottom: 3px; }
td { height: 21.400px; line-height: 19px; padding: 2px 0 0 5px; background: #e6e6e6; }
tr:nth-child(even) td { background: #ededed; }
td + td { text-align: right; padding-right: 6px; border-left: 1px solid #efefef; }
.dk { color: #000; }
.charts { display: grid; grid-template-columns: 359px 351px 331px; grid-template-rows: 268px 237px; }
.chart { width: 330px; height: 237px; background: #dfe0e5; display: grid; }
.chart > * { grid-area: 1 / 1; }
.chart h2 { padding: 3px 0 0 6px; }
.chart svg { width: 330px; height: 237px; }
.gridline path { fill: none; stroke: #c3c4c9; stroke-width: 1; stroke-dasharray: 1 5; }
.tick { font-size: 13.500px; fill: #605e5c; text-anchor: middle; }
.tick text { letter-spacing: -0.02em; }
.axis { font-size: 12.500px; font-weight: 600; fill: #000; text-anchor: middle; }
.series path { fill: none; stroke: #1aab40; stroke-width: 1.300; }
.series circle { fill: #1aab40; }
.filters { width: 34px; border-left: 1px solid #a8a6a4; border-right: 1px solid #d8d6d4; display: flex; flex-direction: column; align-items: center; padding-top: 13px; }
.filters .funnel { margin: 16px 0 6px 3px; }
.filters span { writing-mode: vertical-rl; font-size: 14.500px; font-weight: 600; line-height: 20px; letter-spacing: 0; }
.panes { width: 32px; background: #faf9f8; display: flex; flex-direction: column; align-items: center; gap: 12px; padding-top: 6px; }
.panes svg { width: 20px; height: 20px; }

/* Page tabs and status */
.tabs { height: 35px; flex: none; display: flex; background: #f3f2f1; font-size: 11.500px; }
.rail { width: 41px; border-right: 1px solid #d8d6d4; }
.device { width: 127px; display: flex; padding-left: 10px; }
.desk { width: 24px; height: 31px; padding: 6px 0 0 2px; border-bottom: 3px solid #117865; }
.phone { margin: 4px 0 0 25px; }
.arr { margin: 14px 0 0 21px; } .arr2 { margin: 14px 0 0 17px; }
.tabs a { background: #fff; border-left: 1px solid #c8c6c4; display: flex; align-items: center; justify-content: center; padding-top: 2px; position: relative; }
.t1 { width: 90px; } .t2 { width: 118px; } .t4 { width: 85px; }
.tabs .t3 { width: 152px; border-bottom: 4px solid #117865; font-weight: 600; padding-top: 5px; letter-spacing: -0.033em; }
.t3 i { position: absolute; right: 4px; top: 2px; font-style: normal; font-size: 11px; line-height: 14px; }
.tabs .add { width: 40px; background: #117865; border: 0; padding: 0 0 2px; }
.gear { width: 33px; margin: 3px 0 0 auto; background: #faf9f8; border-left: 1px solid #d8d6d4; border-top: 1px solid #d8d6d4; display: flex; align-items: center; justify-content: center; }
.status { height: 24px; flex: none; border-top: 1px solid #dcdad8; display: flex; align-items: center; padding: 1px 17px 0 4px; font-size: 11.500px; color: #484644; }
.pg { width: 1705px; font-size: 12px; }
.minus { width: 4px; height: 1.500px; background: #605e5c; }
.slider { width: 100px; height: 1px; background: #605e5c; margin-left: 5px; }
.slider i { display: block; width: 4px; height: 11px; margin: -5px 0 0 51px; background: #605e5c; }
.plus { margin-left: 6px; }
.pct { width: 43px; margin-left: 13px; margin-right: -1px; font-size: 12px; color: #797775; }

/* Taskbar */
.taskbar { flex: 1; border-top: 1px solid #000; display: flex; align-items: center; background: linear-gradient(90deg, #d2e0e7 0, #dcdde6 100px, #f5dfe0 160px, #f6e0df 300px, #f2dfe6 430px, #dfdfee 540px, #d6e4ed 640px, #d5dfe8 740px, #d8dbe4 850px, #f0d9db 890px, #f0dadb 950px, #d9dbe4 1010px, #d8dbe3 1920px); }
.weather { width: 550px; display: flex; padding-left: 20px; line-height: 16px; font-size: 11.500px; letter-spacing: 0; }
.weather svg { margin-top: -3px; width: 34px; margin-right: -5px; }
.weather div { padding-left: 1px; }
.sub { color: #4a4a4a; }
.badge { font: 600 11px "Open Sans"; fill: #fff; text-anchor: middle; }
.dock { display: flex; align-items: center; }
.find { width: 218px; height: 32px; margin: 0 2px 0 13px; border-radius: 16px; background: #f5f8fb; border: 1px solid #cfd5dc; display: flex; align-items: center; padding-left: 10px; gap: 10px; font-size: 13.500px; color: #5a5a5a; }
.find + .app { margin-left: 4px; }
.app { width: 38px; height: 38px; margin: 0 3px; display: flex; align-items: center; justify-content: center; position: relative; border-radius: 4px; }
.app svg { width: 24px; height: 24px; }
.run::after, .active::after { content: ""; position: absolute; bottom: 0; left: 16px; width: 6px; height: 3px; border-radius: 2px; background: #7d7f84; }
.active { background: #eeeff3; }
.active::after { left: 11px; width: 16px; background: #e8475b; }
.ell { font: 600 18px "Open Sans"; fill: #fff; text-anchor: middle; }
.tray { margin-left: auto; padding-right: 20px; display: flex; align-items: center; }
.up { margin-right: 18px; }
.cloud { margin-right: 15px; }
.drive { margin-right: 15px; }
.eng { width: 25px; margin: 0 17px 0 3px; font-size: 11.500px; }
.net { margin-right: 7px; }
.vol { margin-right: 7px; }
.bat { margin-right: 15px; }
.clock { text-align: right; line-height: 16px; width: 56px; display: flex; flex-direction: column; align-items: flex-end; font-size: 11.500px; }
```
